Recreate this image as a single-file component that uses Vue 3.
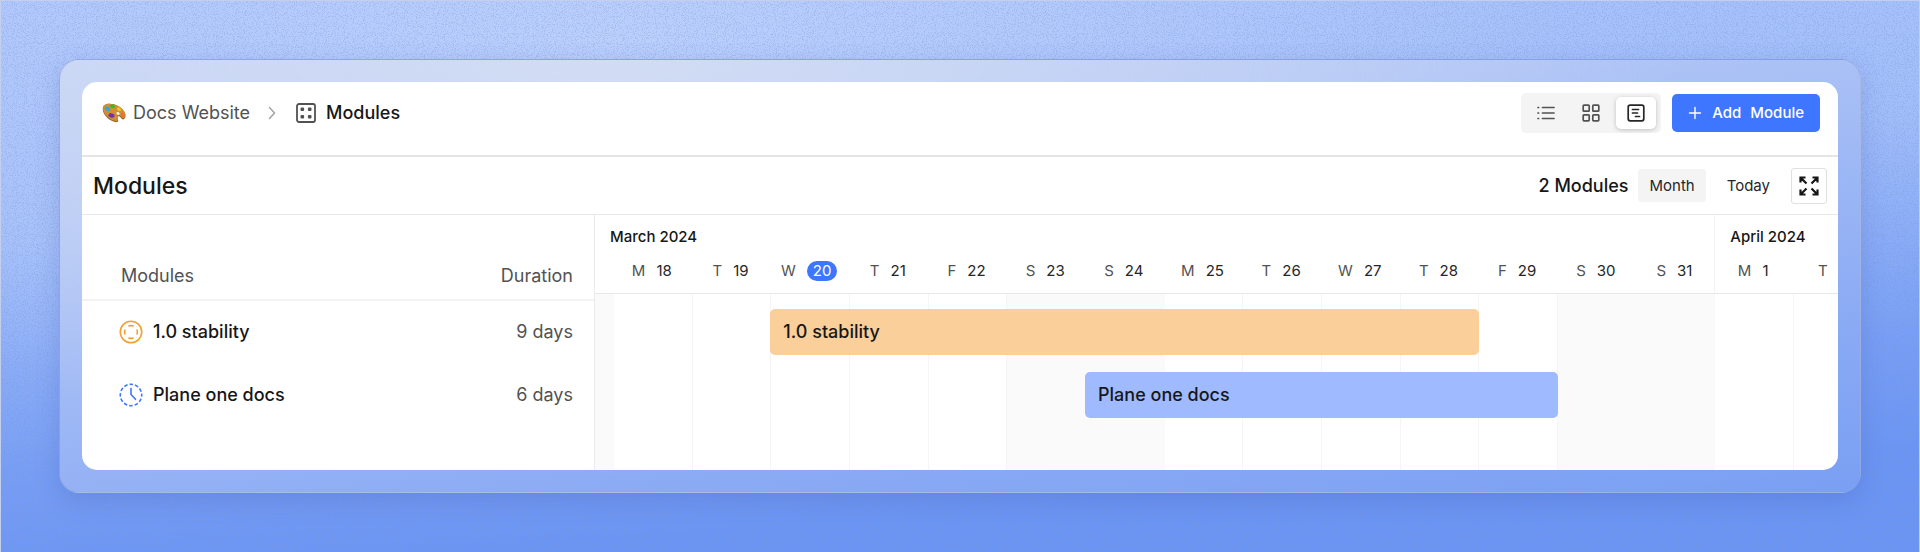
<script setup>
const letters = ['M', 'T', 'W', 'T', 'F', 'S', 'S']

const marchDays = Array.from({ length: 14 }, (_, i) => ({
  letter: letters[i % 7],
  number: 18 + i,
  weekend: i % 7 > 4,
  today: 18 + i === 20,
}))

const days = [
  ...marchDays,
  { letter: 'M', number: 1, weekend: false, today: false },
]

const modules = [
  { name: '1.0 stability', duration: '9 days', status: 'paused' },
  { name: 'Plane one docs', duration: '6 days', status: 'planned' },
]
</script>

<template>
  <div class="backdrop">
    <svg class="grain" aria-hidden="true">
      <filter id="grain" x="0" y="0" width="100%" height="100%">
        <feTurbulence type="fractalNoise" baseFrequency="0.9" numOctaves="2" seed="4" />
        <feColorMatrix values="0 0 0 0 0.2  0 0 0 0 0.3  0 0 0 0 0.6  0 0 0 -6 3" />
      </filter>
      <rect width="100%" height="100%" filter="url(#grain)" />
    </svg>
    <div class="frame">
      <main class="panel">
        <header class="topbar">
          <nav class="crumbs" aria-label="Breadcrumb">
            <a class="crumb" href="#">
              <svg class="palette" viewBox="0 0 24 20" aria-hidden="true">
                <path d="M2 2.6C4.4.2 11 .1 16.500 3.400c4.600 2.800 7.400 6.600 7 9.500-.2 1.500-1 3.200-2.200 3.500-1.700.4-2.300-2.600-3.700-3-1.600-.4-2.400.7-1.800 2.300.6 1.700.5 3.200-.7 3.400-3.300.5-8.500-2.100-11.500-6C.6 9.200-.2 4.900 2 2.600z" fill="#9a6426" />
                <path d="M2.200 2.200C4.600 0 11 0 16.500 3.100c4.400 2.600 7.100 6.200 6.800 9-.2 1.400-.9 2.900-1.900 3.100-1.500.3-2.300-2.500-3.700-2.900-1.700-.4-2.800.8-2.200 2.500.6 1.600.5 2.900-.6 3.100-3.200.4-8.100-2.100-11-5.800C.9 8.500 0 4.400 2.200 2.200z" fill="#cf8f33" />
                <ellipse cx="5.500" cy="5.700" rx="2.800" ry="1.900" fill="#27a9e2" transform="rotate(25 5.500 5.700)" />
                <ellipse cx="10.500" cy="3.200" rx="2.500" ry="1.700" fill="#35b82a" transform="rotate(15 10.500 3.200)" />
                <ellipse cx="17" cy="6.200" rx="2.300" ry="1.600" fill="#efc52b" transform="rotate(35 17 6.200)" />
                <ellipse cx="20.800" cy="11.800" rx="1.500" ry="2.400" fill="#f2673f" transform="rotate(-25 20.800 11.800)" />
                <ellipse cx="9.500" cy="12.500" rx="3.100" ry="2.100" fill="#7a2bb5" transform="rotate(15 9.500 12.500)" />
                <ellipse cx="16" cy="10.400" rx="1.700" ry="1.200" fill="#fff" transform="rotate(30 16 10.400)" />
              </svg>
              <span>Docs Website</span>
            </a>
            <svg class="chevron" viewBox="0 0 8 14" aria-hidden="true">
              <path d="M1.500 1.500 6.500 7l-5 5.500" />
            </svg>
            <span class="crumb current" aria-current="page">
              <svg class="dice" viewBox="0 0 20 20" aria-hidden="true">
                <rect x="1" y="1" width="18" height="18" rx="2" />
                <g class="dots">
                  <rect x="4.500" y="4.500" width="3.600" height="3.600" rx="1" />
                  <rect x="11.900" y="4.500" width="3.600" height="3.600" rx="1" />
                  <rect x="4.500" y="11.900" width="3.600" height="3.600" rx="1" />
                  <rect x="11.900" y="11.900" width="3.600" height="3.600" rx="1" />
                </g>
              </svg>
              <span>Modules</span>
            </span>
          </nav>
          <div class="actions">
            <div class="switcher" role="group" aria-label="Layout">
              <button class="view" type="button" aria-label="List">
                <svg class="icon" viewBox="0 0 18 18" aria-hidden="true">
                  <path d="M5.500 3.500H17M5.500 9H17M5.500 14.500H17M1 3.500h.6M1 9h.6M1 14.500h.6" />
                </svg>
              </button>
              <button class="view" type="button" aria-label="Grid">
                <svg class="icon" viewBox="0 0 18 18" aria-hidden="true">
                  <rect x="1.200" y="1.200" width="6" height="6" rx=".8" />
                  <rect x="10.800" y="1.200" width="6" height="6" rx=".8" />
                  <rect x="1.200" y="10.800" width="6" height="6" rx=".8" />
                  <rect x="10.800" y="10.800" width="6" height="6" rx=".8" />
                </svg>
              </button>
              <button class="view active" type="button" aria-label="Gantt" aria-pressed="true">
                <svg class="icon" viewBox="0 0 18 18" aria-hidden="true">
                  <rect x="1.200" y="1.200" width="15.600" height="15.600" rx="2" />
                  <path d="M5.500 5.500h6M5.500 9h5M8.500 12.500h4" />
                </svg>
              </button>
            </div>
            <button class="add" type="button">
              <svg class="plus" viewBox="0 0 14 14" aria-hidden="true">
                <path d="M7 1.500v11M1.500 7h11" />
              </svg>
              <span>Add</span>
              <span>Module</span>
            </button>
          </div>
        </header>

        <div class="toolbar">
          <h1 class="title">Modules</h1>
          <span class="count">2 Modules</span>
          <button class="range selected" type="button">Month</button>
          <button class="range" type="button">Today</button>
          <button class="expand" type="button" aria-label="Expand">
            <svg class="arrows" viewBox="0 0 20 20" aria-hidden="true">
              <path d="M1.500 6.500v-5h5M1.500 1.500 7.500 7.500M13.500 1.500h5v5M18.500 1.500l-6 6M1.500 13.500v5h5M1.500 18.500l6-6M13.500 18.500h5v-5M18.500 18.500l-6-6" />
            </svg>
          </button>
        </div>

        <div class="gantt">
          <div class="sidebar">
            <table class="list">
              <thead>
                <tr>
                  <th scope="col">Modules</th>
                  <th scope="col" class="end">Duration</th>
                </tr>
              </thead>
              <tbody>
                <tr v-for="m in modules" :key="m.name">
                  <td>
                    <span class="module">
                      <svg v-if="m.status === 'paused'" class="status paused" viewBox="0 0 24 24" aria-hidden="true">
                        <circle cx="12" cy="12" r="10.700" />
                        <path d="M10 5.900q2-.5 4 0M10 18.100q2 .5 4 0M5.900 10q-.5 2 0 4M18.100 10q.5 2 0 4" />
                      </svg>
                      <svg v-else class="status planned" viewBox="0 0 24 24" aria-hidden="true">
                        <circle cx="12" cy="12" r="10.700" stroke-dasharray="3.600 2" stroke-dashoffset="1.800" />
                        <path d="M12 5.500V11.500l4.500 4.800" />
                      </svg>
                      <span>{{ m.name }}</span>
                    </span>
                  </td>
                  <td class="end">{{ m.duration }}</td>
                </tr>
              </tbody>
            </table>
          </div>

          <section class="chart" aria-label="Timeline">
            <div class="tracks head">
              <span class="month march">March 2024</span>
              <span class="month april">April 2024</span>
              <span class="lead"></span>
              <span
                v-for="(d, i) in days"
                :key="i"
                class="day"
                :style="{ gridColumn: i + 2 }"
              >
                <span class="letter">{{ d.letter }}</span>
                <span :class="['number', { today: d.today }]">{{ d.number }}</span>
              </span>
              <span class="day cut"><span class="letter">T</span></span>
            </div>
            <div class="tracks body">
              <span class="column weekend start"></span>
              <span
                v-for="(d, i) in days"
                :key="i"
                :class="['column', { weekend: d.weekend }]"
                :style="{ gridColumn: i + 2 }"
              ></span>
              <span class="bar stability">1.0 stability</span>
              <span class="bar docs">Plane one docs</span>
            </div>
          </section>
        </div>
      </main>
    </div>
  </div>
</template>

<style>
body {
  background: #6892f2;
}
</style>

<style scoped>
.backdrop,
.backdrop * {
  box-sizing: border-box;
}

.backdrop {
  position: relative;
  min-height: 100vh;
  padding: 58px;
  border: solid #c3cfec;
  border-width: 1px 1px 0;
  font-family: Inter, 'Liberation Sans', sans-serif;
  font-size: 18px;
  line-height: 24px;
  color: #171717;
  background:
    radial-gradient(ellipse 50% 75% at 32% 8%, rgba(190, 210, 253, 0.85), rgba(190, 210, 253, 0) 100%),
    linear-gradient(176deg, #abc5fc 0%, #a2befa 35%, #789ff6 68%, #6b95f5 85%, #6b95f5 100%);
}

.grain {
  position: absolute;
  inset: 0;
  width: 100%;
  height: 100%;
  opacity: 0.3;
}

button {
  display: flex;
  align-items: center;
  justify-content: center;
  padding: 0;
  border: 0;
  background: none;
  font: inherit;
  color: inherit;
}

svg {
  flex: none;
  fill: none;
  stroke-linecap: round;
  stroke-linejoin: round;
}

.frame {
  position: relative;
  padding: 22px;
  border: 1px solid rgba(140, 160, 215, 0.55);
  border-radius: 20px;
  background:
    radial-gradient(ellipse 60% 90% at 30% 0%, rgba(212, 222, 244, 0.9), rgba(212, 222, 244, 0) 100%),
    linear-gradient(172deg, #c4d3f5 0%, #b0c5f6 30%, #8aaaf4 75%, #7a9ff3 100%);
  box-shadow: 0 8px 24px rgba(60, 85, 170, 0.24);
}

.panel {
  overflow: hidden;
  border-radius: 15px;
  background: #fff;
}

.topbar {
  display: flex;
  justify-content: space-between;
  align-items: flex-start;
  height: 75px;
  padding: 11px 18px 0 20px;
  border-bottom: 2px solid #e5e5e5;
}

.crumbs {
  display: flex;
  align-items: center;
  height: 40px;
}

.crumb {
  display: flex;
  align-items: center;
  gap: 7px;
  color: #525252;
  text-decoration: none;
}

.crumb.current {
  gap: 10px;
  font-weight: 500;
  color: #171717;
}

.palette {
  width: 24px;
  height: 20px;
}

.chevron {
  width: 8px;
  height: 14px;
  margin: 0 20px 0 18px;
  stroke: #a3a3a3;
  stroke-width: 1.5;
}

.dice {
  width: 20px;
  height: 20px;
  stroke: #525252;
  stroke-width: 1.8;
}

.dots {
  fill: #525252;
  stroke: none;
}

.actions {
  display: flex;
  align-items: center;
  gap: 11px;
}

.switcher {
  display: flex;
  gap: 5px;
  padding: 4px 5px;
  border-radius: 5px;
  background: #f4f4f4;
}

.view {
  width: 40px;
  height: 32px;
  border-radius: 5px;
}

.view.active {
  background: #fff;
  box-shadow: 0 1px 4px rgba(0, 0, 0, 0.22);
}

.icon {
  width: 18px;
  height: 18px;
  stroke: #525252;
  stroke-width: 1.7;
}

.view.active .icon {
  stroke: #262626;
}

.add {
  gap: 9px;
  height: 38px;
  padding: 0 16px;
  border-radius: 5px;
  background: #3f76ff;
  font-size: 15px;
  font-weight: 500;
  color: #fff;
}

.plus {
  width: 14px;
  height: 14px;
  margin-right: 1px;
  stroke: #fff;
  stroke-width: 1.4;
}

.toolbar {
  display: flex;
  align-items: center;
  height: 57px;
  padding: 0 11px;
}

.title {
  flex: 1;
  margin: 0;
  font-size: 23px;
  font-weight: 500;
}

.count {
  margin-right: 10px;
  font-weight: 500;
}

.range {
  height: 33px;
  padding: 0 11px;
  border-radius: 3px;
  font-size: 15px;
  color: #262626;
}

.range.selected {
  margin-right: 10px;
  background: #f4f4f4;
}

.expand {
  width: 36px;
  height: 36px;
  margin-left: 10px;
  border: 1px solid #e0e0e0;
  border-radius: 3px;
}

.arrows {
  width: 20px;
  height: 20px;
  stroke: #171717;
  stroke-width: 2.2;
  stroke-linecap: butt;
  stroke-linejoin: miter;
}

.gantt {
  display: grid;
  grid-template-columns: 513fr 1243fr;
  border-top: 1px solid #e8e8e8;
}

.sidebar {
  border-right: 1px solid #ebebeb;
}

.list {
  width: 100%;
  border-collapse: collapse;
}

.list th {
  height: 85px;
  padding: 38px 0 0 39px;
  border-bottom: 2px solid #f3f3f3;
  font-weight: 400;
  text-align: left;
  color: #525252;
}

.list td {
  height: 63px;
  padding: 0 0 0 37px;
}

.list .end {
  padding-right: 21px;
  text-align: right;
  color: #525252;
}

.module {
  display: flex;
  align-items: center;
  gap: 10px;
  font-weight: 500;
}

.status {
  width: 24px;
  height: 24px;
  stroke-width: 1.6;
}

.status.paused {
  stroke: #f5a034;
}

.status.planned {
  stroke: #3f76ff;
}

.status.planned circle {
  stroke-linecap: butt;
}

.chart {
  min-width: 0;
  font-size: 15px;
}

.tracks {
  display: grid;
  grid-template-columns: minmax(0, 57fr) repeat(15, minmax(0, 236fr)) minmax(0, 132fr);
}

.head {
  grid-template-rows: 44px 34px;
  border-bottom: 1px solid #e8e8e8;
}

.month {
  padding-top: 10px;
  font-weight: 500;
  white-space: nowrap;
}

.march {
  grid-row: 1;
  grid-column: 1 / 16;
  padding-left: 15px;
}

.april {
  grid-row: 1 / 3;
  grid-column: 16 / 18;
  margin-left: -1px;
  padding-left: 15px;
  border-left: 1px solid #f3f3f3;
}

.lead {
  grid-column: 1;
  grid-row: 2;
}

.day {
  display: flex;
  grid-row: 2;
  justify-content: center;
  gap: 11px;
  padding-right: 3px;
}

.cut {
  grid-column: 17;
  justify-content: flex-start;
  padding: 0 0 0 24px;
}

.letter {
  color: #525252;
}

.number {
  color: #262626;
}

.number.today {
  height: 20px;
  margin-top: 2px;
  padding: 0 6px;
  border-radius: 10px;
  line-height: 20px;
  background: #3f76ff;
  color: #fff;
}

.body {
  grid-template-rows: 15px 46px 17px 46px 52px;
}

.column {
  grid-row: 1 / 6;
  border-right: 1px solid #f5f5f5;
}

.weekend {
  border-color: #fafafa;
  background: #fafafa;
}

.start {
  grid-column: 1;
}

.bar {
  display: flex;
  align-items: center;
  margin-left: -1px;
  padding-left: 13px;
  border-radius: 5px;
  font-size: 18px;
  font-weight: 500;
}

.stability {
  grid-row: 2;
  grid-column: 4 / 13;
  background: #facf9a;
}

.docs {
  grid-row: 4;
  grid-column: 8 / 14;
  background: #9fbaff;
}
</style>
